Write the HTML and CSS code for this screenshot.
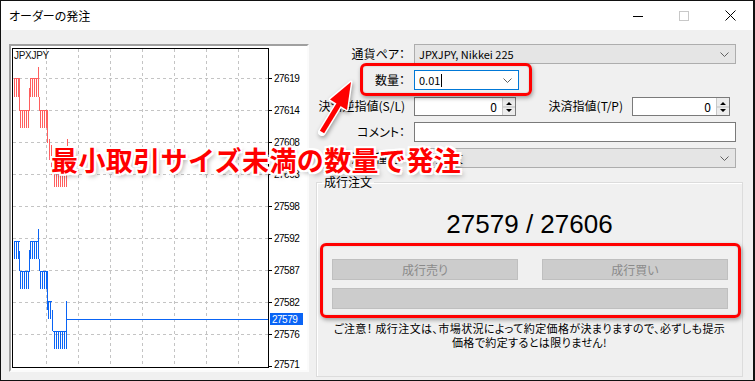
FILE: index.html
```html
<!DOCTYPE html>
<html lang="ja">
<head>
<meta charset="utf-8">
<title>オーダーの発注</title>
<link rel="stylesheet" href="styles.css">
</head>
<body>
<div class="window">
  <div class="titlebar">
    <span class="title">オーダーの発注</span>
    <div class="controls">
      <span class="ctl"><svg width="10" height="10" viewBox="0 0 10 10"><path d="M0 5.5H10" stroke="#000"/></svg></span>
      <span class="ctl"><svg width="10" height="10" viewBox="0 0 10 10"><rect x=".5" y=".5" width="9" height="9" fill="none" stroke="#c8c8c8"/></svg></span>
      <span class="ctl"><svg width="11" height="11" viewBox="0 0 11 11"><path d="M.5 .5L10.5 10.5M10.5 .5L.5 10.5" stroke="#000" fill="none"/></svg></span>
    </div>
  </div>
  <div class="content">
    <div class="chart-frame">
      <svg width="296" height="324" viewBox="11 46 296 324">
        <defs>
          <pattern id="pr" width="2" height="10" patternUnits="userSpaceOnUse"><rect x="0" y="0" width="1" height="10" fill="#ff5f5f"/></pattern>
          <pattern id="pb" width="2" height="10" patternUnits="userSpaceOnUse"><rect x="0" y="0" width="1" height="10" fill="#0a64f5"/></pattern>
        </defs>
        <g stroke="#c4c4c4" stroke-dasharray="3 3" fill="none">
          <path d="M46.5 49V367M78.5 49V367M110.5 49V367M142.5 49V367M174.5 49V367M206.5 49V367M238.5 49V367"/>
          <path d="M13 78.5H268M13 110.5H268M13 142.5H268M13 174.5H268M13 206.5H268M13 238.5H268M13 270.5H268M13 302.5H268M13 334.5H268"/>
        </g>
        <g fill="url(#pr)">
          <rect x="14" y="78" width="6" height="19"/>
          <rect x="20" y="110" width="10" height="18"/>
          <rect x="30" y="78" width="8" height="19"/>
          <rect x="40" y="110" width="7" height="18"/>
          <rect x="53" y="173" width="14" height="14"/>
        </g>
        <path stroke="#ff5f5f" fill="none" d="M14 78.5H20M19.5 78V111M20 110.5H30M29.5 88V111M30 78.5H38M38.5 67V97M39.5 97V111M40 110.5H47M47.5 110V143M49.5 139V160M51.5 145V175M53 173.5H67M67.5 139V160"/>
        <g fill="url(#pb)">
          <rect x="14" y="241" width="6" height="18"/>
          <rect x="20" y="271" width="10" height="18"/>
          <rect x="30" y="241" width="8" height="18"/>
          <rect x="40" y="271" width="7" height="18"/>
          <rect x="48" y="301" width="4" height="18"/>
          <rect x="53" y="331" width="14" height="18"/>
        </g>
        <path stroke="#0a64f5" fill="none" d="M14 241.5H20M19.5 251V271M20 271.5H30M29.5 250V271M30 241.5H38M38.5 229V259M39.5 259V271M40 271.5H47M47.5 271V310M48 301.5H52M52.5 310V331M53 331.5H67M66.5 301V331M67 319.5H268"/>
        <rect x="12.5" y="48.5" width="256" height="319" fill="none" stroke="#000"/>
        <path stroke="#000" d="M269 78.5h3M269 110.5h3M269 142.5h3M269 174.5h3M269 206.5h3M269 238.5h3M269 270.5h3M269 302.5h3M269 334.5h3M269 366.5h3"/>
        <text x="14" y="59" class="sym">JPXJPY</text>
        <g class="axis">
          <text x="274" y="82">27619</text>
          <text x="274" y="114">27614</text>
          <text x="274" y="146">27608</text>
          <text x="274" y="178">27603</text>
          <text x="274" y="210">27598</text>
          <text x="274" y="242">27592</text>
          <text x="274" y="274">27587</text>
          <text x="274" y="306">27582</text>
          <text x="274" y="338">27576</text>
          <text x="274" y="368">27571</text>
        </g>
        <rect x="270" y="313" width="33" height="12" fill="#0a64f5"/>
        <text x="272" y="323" class="axis-hl">27579</text>
      </svg>
    </div>

    <div class="form">
      <div class="row">
        <span class="lbl">通貨ペア：</span>
        <div class="combo">
          <span class="val">JPXJPY, Nikkei 225</span>
          <svg class="chev" width="9" height="5" viewBox="0 0 9 5"><path d="M.5 .5L4.5 4.5L8.5 .5" stroke="#606060" fill="none"/></svg>
        </div>
      </div>
      <div class="row">
        <span class="lbl">数量：</span>
        <div class="combo combo-focus">
          <span class="val">0.01<i class="caret"></i></span>
          <svg class="chev" width="9" height="5" viewBox="0 0 9 5"><path d="M.5 .5L4.5 4.5L8.5 .5" stroke="#606060" fill="none"/></svg>
        </div>
      </div>
      <div class="row">
        <span class="lbl">決済逆指値(S/L)</span>
        <div class="pair">
          <div class="spinfield sf-sl">
            <div class="num">0</div>
            <div class="spin"><svg width="12" height="18" viewBox="0 0 12 18"><path d="M3 7L6 4L9 7Z M3 11L6 14L9 11Z" fill="#000"/><path d="M0 9H12" stroke="#bdbdbd"/></svg></div>
          </div>
          <span class="lbl2">決済指値(T/P)</span>
          <div class="spinfield sf-tp">
            <div class="num">0</div>
            <div class="spin"><svg width="12" height="18" viewBox="0 0 12 18"><path d="M3 7L6 4L9 7Z M3 11L6 14L9 11Z" fill="#000"/><path d="M0 9H12" stroke="#bdbdbd"/></svg></div>
          </div>
        </div>
      </div>
      <div class="row">
        <span class="lbl">コメント：</span>
        <div class="field"></div>
      </div>
      <div class="row">
        <span class="lbl">注文種別：</span>
        <div class="combo">
          <span class="val">成行注文</span>
          <svg class="chev" width="9" height="5" viewBox="0 0 9 5"><path d="M.5 .5L4.5 4.5L8.5 .5" stroke="#606060" fill="none"/></svg>
        </div>
      </div>

      <fieldset class="group">
        <legend>成行注文</legend>
        <div class="quote">27579 / 27606</div>
        <div class="btn-row">
          <div class="btn">成行売り</div>
          <div class="btn">成行買い</div>
        </div>
        <div class="btn btn-full"></div>
        <p class="notice">ご注意！ 成行注文は、市場状況によって約定価格が決まりますので、必ずしも提示<br>価格で約定するとは限りません!</p>
      </fieldset>
    </div>
  </div>

  <div class="mark mark-qty"></div>
  <div class="mark mark-btns"></div>
  <svg class="arrow" width="755" height="381" viewBox="0 0 755 381">
    <g stroke="#fff" stroke-width="3" stroke-linejoin="round" fill="#fff">
      <path d="M322 132L339 104" stroke-width="8" stroke-linecap="round"/>
      <path d="M351 82L330 99.5L347 110Z"/>
    </g>
    <g fill="#f00">
      <path d="M322 132L339 104" stroke="#f00" stroke-width="5"/>
      <path d="M351 82L330 99.5L347 110Z"/>
    </g>
  </svg>
  <div class="annot">最小取引サイズ未満の数量で発注</div>
</div>
</body>
</html>
```

FILE: styles.css
```css
* { box-sizing: border-box; }
html, body { margin: 0; padding: 0; }
body {
  width: 755px;
  height: 381px;
  overflow: hidden;
  background: #fff;
  font-family: "Noto Sans CJK JP", "Noto Sans", sans-serif;
  font-size: 12px;
  color: #000;
}

.window {
  position: relative;
  width: 755px;
  height: 381px;
  border: 1px solid #111;
  border-right-width: 2px;
  background: #f0f0f0;
  display: flex;
  flex-direction: column;
}

.titlebar {
  flex: none;
  height: 29px;
  background: #fff;
  display: flex;
  align-items: center;
}
.title {
  margin-left: 8px;
  font-size: 12px;
  font-feature-settings: "palt";
}
.controls {
  margin-left: auto;
  display: flex;
  height: 100%;
}
.ctl {
  width: 46px;
  display: flex;
  align-items: center;
  justify-content: center;
}
.ctl svg { display: block; }

.content {
  flex: 1;
  display: flex;
  padding: 14px 0 0 8px;
}

.chart-frame {
  flex: none;
  width: 300px;
  height: 328px;
  border: 2px solid;
  border-color: #a0a0a0 #fbfbfb #fbfbfb #a0a0a0;
  background: #fff;
}
.chart-frame svg { display: block; overflow: visible; }
.sym {
  font-family: "Liberation Sans", sans-serif;
  font-size: 10px;
  letter-spacing: -0.3px;
  fill: #111;
}
.axis text, .axis-hl {
  font-family: "Liberation Sans", sans-serif;
  font-size: 10px;
  letter-spacing: -0.5px;
  fill: #000;
}
.axis-hl { fill: #fff; }

.form {
  flex: none;
  width: 427px;
  margin-left: 7px;
  display: flex;
  flex-direction: column;
}
.row {
  display: grid;
  grid-template-columns: 89px 322px;
  column-gap: 9px;
  height: 20px;
  align-items: center;
  margin-bottom: 6px;
}
.lbl, .lbl2 {
  text-align: right;
  white-space: nowrap;
  font-size: 12px;
  font-feature-settings: "palt";
  line-height: 20px;
}

.combo {
  height: 20px;
  border: 1px solid #adadad;
  background: #e5e5e5;
  display: flex;
  align-items: center;
  justify-content: space-between;
  padding: 0 6px 0 4px;
}
.combo .val {
  font-size: 11px;
  line-height: 18px;
  display: flex;
  align-items: center;
  font-feature-settings: "palt";
}
.combo-focus {
  width: 105px;
  background: #fff;
  border-color: #0078d7;
}
.caret {
  display: inline-block;
  width: 1px;
  height: 13px;
  background: #000;
  margin-left: 1px;
}
.chev { display: block; }

.field {
  height: 20px;
  background: #fff;
  border: 1px solid #7a7a7a;
}

.pair {
  display: flex;
  align-items: center;
  height: 20px;
}
.spinfield {
  display: flex;
  height: 19px;
  background: #fff;
  border: 1px solid #7a7a7a;
}
.sf-sl { width: 102px; }
.sf-tp { width: 98px; }
.num {
  flex: 1;
  text-align: right;
  padding-right: 5px;
  font-size: 12px;
  line-height: 17px;
}
.spin {
  width: 13px;
  background: #ececec;
  border-left: 1px solid #c8c8c8;
}
.spin svg { display: block; }
.lbl2 {
  width: 116px;
  padding-right: 9px;
}

.group {
  margin: 1px 0 0;
  padding: 0;
  width: 427px;
  height: 202px;
  min-width: 0;
  border: 1px solid #dcdcdc;
  box-shadow: inset 1px 1px 0 #fff;
}
.group legend {
  margin-left: 5px;
  padding: 0 2px;
  font-size: 12px;
  line-height: 14px;
}
.quote {
  margin-top: 20px;
  text-align: center;
  font-family: "Liberation Sans", sans-serif;
  font-size: 26px;
  line-height: 30px;
}
.btn-row {
  display: flex;
  gap: 24px;
  margin: 20px 14px 0 15px;
}
.btn {
  flex: 1;
  height: 21px;
  background: #cccccc;
  border: 1px solid #bfbfbf;
  color: #8a8a8a;
  font-size: 12px;
  font-feature-settings: "palt";
  display: flex;
  align-items: center;
  justify-content: center;
}
.btn-full { flex: none; margin: 8px 14px 0 15px; }
.notice {
  margin: 12px 0 0;
  text-align: center;
  font-size: 11px;
  letter-spacing: 0.4px;
  line-height: 14px;
  font-feature-settings: "palt";
}

/* annotation overlays */
.mark {
  position: absolute;
  border: 3px solid #f00;
  border-radius: 6px;
  box-shadow: 1px 2px 4px rgba(0, 0, 0, 0.35), inset 0 0 2px rgba(0, 0, 0, 0.2);
}
.mark-qty { left: 359px; top: 62px; width: 172px; height: 33px; }
.mark-btns { left: 319px; top: 242px; width: 421px; height: 75px; }

.arrow {
  position: absolute;
  left: -1px;
  top: -1px;
  filter: drop-shadow(1px 2px 2px rgba(0, 0, 0, 0.35));
}

.annot {
  position: absolute;
  left: 50px;
  top: 145px;
  font-size: 27px;
  line-height: 27px;
  font-weight: 700;
  letter-spacing: 0.4px;
  color: #f00;
  white-space: nowrap;
  text-shadow:
    2px 0 0 #fff, -2px 0 0 #fff, 0 2px 0 #fff, 0 -2px 0 #fff,
    2px 2px 0 #fff, -2px -2px 0 #fff, 2px -2px 0 #fff, -2px 2px 0 #fff,
    3px 3px 5px rgba(0, 0, 0, 0.35);
}
```
